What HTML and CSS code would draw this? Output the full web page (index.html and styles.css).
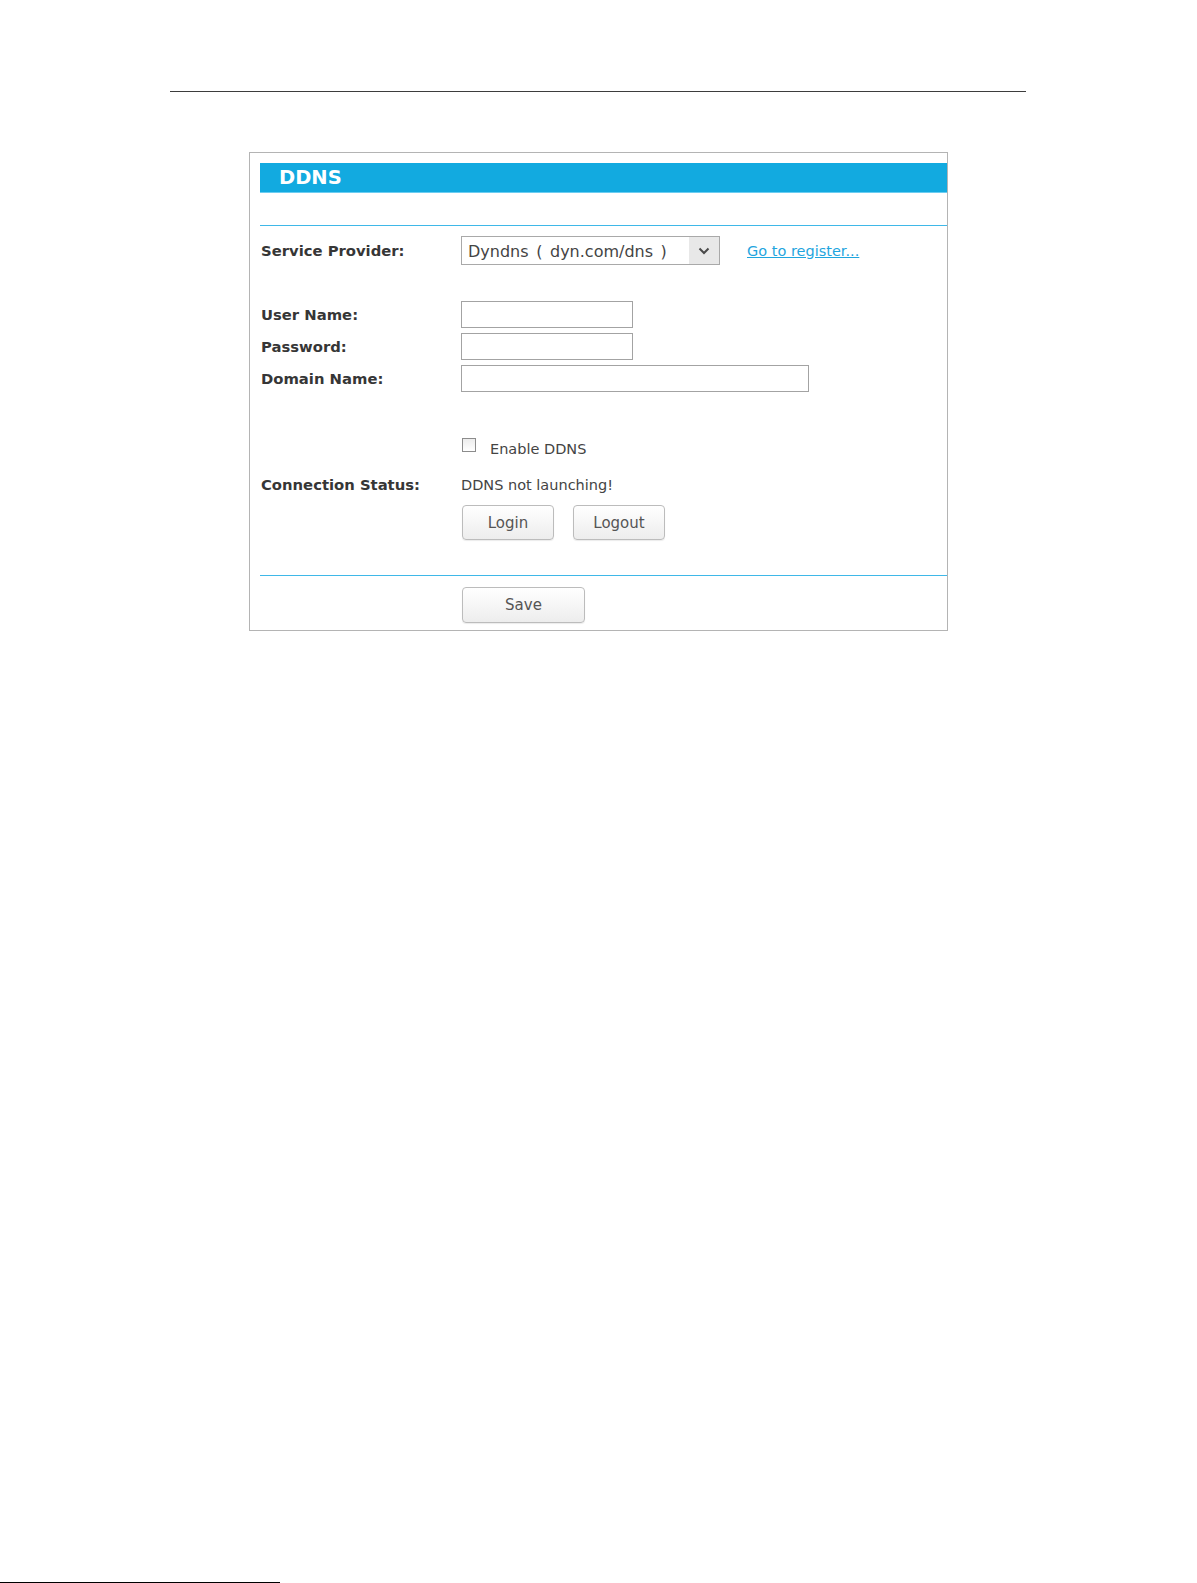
FILE: index.html
```html
<!DOCTYPE html>
<html lang="en">
<head>
  <meta charset="UTF-8">
  <title>DDNS</title>
  <link rel="stylesheet" href="styles.css">
</head>
<body>
<div class="page">
  <div class="top-rule"></div>

  <div class="panel">
    <div class="panel-title">DDNS</div>
    <div class="divider"></div>

    <div class="row row-provider">
      <div class="label">Service Provider:</div>
      <div class="field">
        <div class="select">
          <span class="select-text">Dyndns ( dyn.com/dns )</span>
          <span class="select-arrow">
            <svg width="12" height="8" viewBox="0 0 12 8">
              <polyline points="1.5,1.5 6,6 10.5,1.5" fill="none" stroke="#4a4a4a" stroke-width="2"/>
            </svg>
          </span>
        </div>
        <a class="register" href="#">Go to register...</a>
      </div>
    </div>

    <div class="row row-user">
      <div class="label">User Name:</div>
      <div class="field"><input type="text" class="text-input"></div>
    </div>
    <div class="row row-next">
      <div class="label">Password:</div>
      <div class="field"><input type="password" class="text-input"></div>
    </div>
    <div class="row row-next">
      <div class="label">Domain Name:</div>
      <div class="field"><input type="text" class="text-input wide"></div>
    </div>

    <div class="row row-check">
      <div class="label"></div>
      <div class="field">
        <input type="checkbox" class="checkbox" id="enableDdns">
        <label class="check-text" for="enableDdns">Enable DDNS</label>
      </div>
    </div>

    <div class="row row-status">
      <div class="label">Connection Status:</div>
      <div class="field status-text">DDNS not launching!</div>
    </div>

    <div class="row row-buttons">
      <div class="label"></div>
      <div class="field buttons">
        <button class="btn">Login</button>
        <button class="btn">Logout</button>
      </div>
    </div>

    <div class="divider divider-bottom"></div>

    <div class="row row-save">
      <div class="label"></div>
      <div class="field"><button class="btn btn-save">Save</button></div>
    </div>
  </div>

  <div class="page-foot"></div>
</div>
</body>
</html>
```

FILE: styles.css
```css
html, body {
  margin: 0;
  padding: 0;
  background: #fff;
}
body {
  font-family: "DejaVu Sans", Verdana, sans-serif;
  font-size: 14.5px;
  color: #333;
}
.page {
  min-height: 100vh;
  display: flex;
  flex-direction: column;
}
.top-rule {
  height: 1px;
  background: #3d3d3d;
  margin: 91px 0 0 170px;
  width: 856px;
}

/* settings panel */
.panel {
  box-sizing: border-box;
  width: 699px;
  margin: 60px 0 0 249px;
  border: 1px solid #b4b4b4;
  padding: 10px 0 7px 10px;
}
.panel-title {
  height: 29px;
  line-height: 30px;
  background: #12aae0;
  border-bottom: 1px solid #6ccdf1;
  color: #fff;
  font-weight: bold;
  font-size: 19.5px;
  padding-left: 19px;
}
.divider {
  height: 1px;
  background: #3fb8e8;
  margin-top: 32px;
}
.divider-bottom {
  margin-top: 35px;
}

/* form rows */
.row {
  display: grid;
  grid-template-columns: 200px 1fr;
  align-items: center;
  padding-left: 1px;
}
.label {
  font-weight: bold;
  font-size: 14.8px;
  color: #363636;
}
.field {
  display: flex;
  align-items: center;
}
.row-provider {
  margin-top: 10px;
}
.row-user {
  margin-top: 36px;
}
.row-next {
  margin-top: 5px;
}

.select {
  box-sizing: border-box;
  width: 259px;
  height: 29px;
  border: 1px solid #a9a9a9;
  display: flex;
  align-items: center;
  justify-content: space-between;
  background: #fff;
}
.select-text {
  font-size: 16px;
  color: #444;
  padding: 2px 0 0 6px;
  white-space: nowrap;
  word-spacing: 2.5px;
}
.select-arrow {
  width: 30px;
  height: 27px;
  background: #e8e8e8;
  display: flex;
  align-items: center;
  justify-content: center;
}
.register {
  margin: 0 0 0 27px;
  color: #1fa5de;
  text-decoration: underline;
}

.text-input {
  box-sizing: border-box;
  width: 172px;
  height: 27px;
  border: 1px solid #a3a3a3;
  margin: 0;
  padding: 0 4px;
  font: inherit;
}
.text-input.wide {
  width: 348px;
}

.row-check {
  margin-top: 47px;
  align-items: start;
}
.row-check .field {
  align-items: flex-start;
}
.checkbox {
  appearance: none;
  -webkit-appearance: none;
  box-sizing: border-box;
  width: 14px;
  height: 14px;
  margin: -1px 0 0 1px;
  border: 1px solid #8c8c8c;
  background: linear-gradient(#ececec, #fff);
}
.check-text {
  margin-left: 14px;
  line-height: 20px;
  color: #444;
}
.row-status {
  margin-top: 16px;
  line-height: 20px;
}
.status-text {
  color: #444;
}

.row-buttons {
  margin-top: 10px;
}
.buttons {
  gap: 19px;
}
.btn {
  box-sizing: border-box;
  width: 92px;
  height: 35px;
  margin: 0 0 0 1px;
  border: 1px solid #bcbcbc;
  border-radius: 4px;
  background: linear-gradient(#ffffff, #ededed);
  box-shadow: 0 1px 1px rgba(0,0,0,0.08);
  font-family: inherit;
  font-size: 15px;
  color: #555;
  padding: 0;
}
.buttons .btn + .btn {
  margin-left: 0;
}
.row-save {
  margin-top: 11px;
}
.btn-save {
  width: 123px;
  height: 36px;
}

.page-foot {
  margin-top: auto;
  height: 1px;
  width: 280px;
  background: #000;
}
```
